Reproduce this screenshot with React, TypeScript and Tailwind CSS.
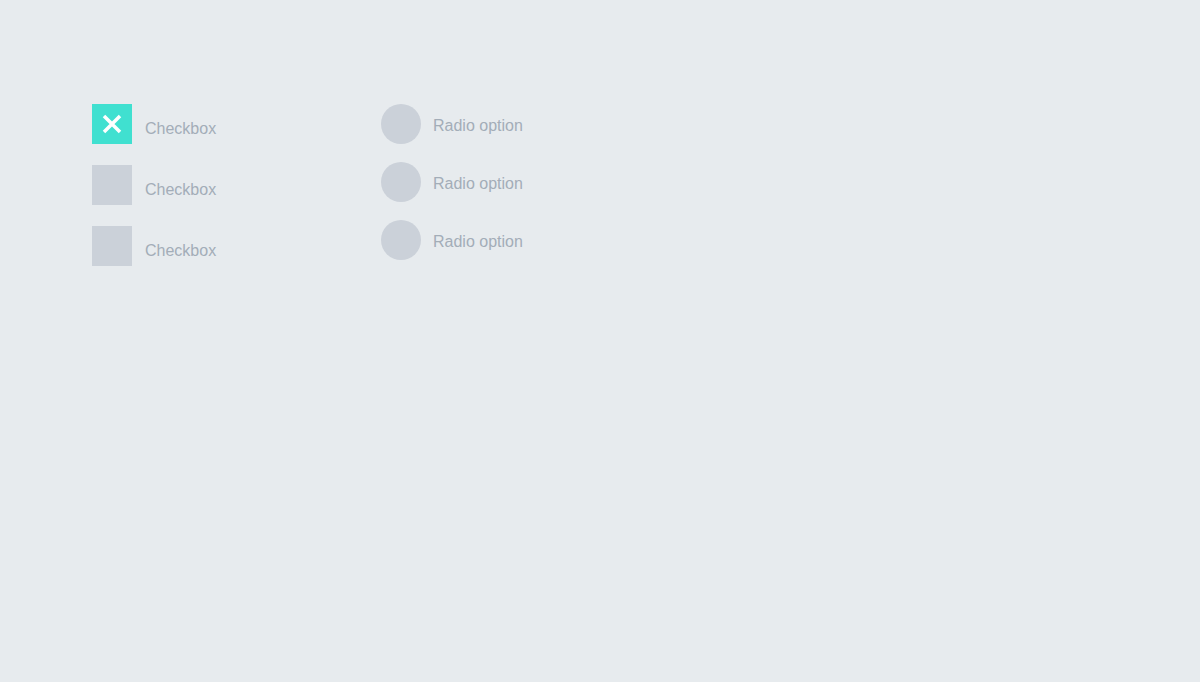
import React from 'react';

function CheckRow({ checked }: { checked?: boolean }) {
  return (
    <div className="flex items-start gap-[13px]">
      <div
        className={`w-10 h-10 flex items-center justify-center ${
          checked ? 'bg-[#40e0d0]' : 'bg-[#cbd1d9]'
        }`}
      >
        {checked && (
          <svg width="20" height="20" viewBox="0 0 20 20">
            <path d="M2 2 L18 18 M18 2 L2 18" stroke="#fff" strokeWidth="3.5" strokeLinecap="butt" />
          </svg>
        )}
      </div>
      <span className="mt-[16px] text-[16px] leading-[18px] text-[#a3adb8]">Checkbox</span>
    </div>
  );
}

function RadioRow() {
  return (
    <div className="flex items-center gap-3">
      <div className="w-10 h-10 rounded-full bg-[#cbd1d9]" />
      <span className="mt-[4px] text-[16px] leading-[18px] text-[#a3adb8]">Radio option</span>
    </div>
  );
}

export default function App() {
  return (
    <div
      className="w-[1200px] h-[682px] bg-[#e7ebee] pt-[104px] pl-[92px] flex gap-0"
      style={{ fontFamily: '"Liberation Sans", Arial, sans-serif' }}
    >
      <div className="w-[289px] flex flex-col gap-[21px]">
        <CheckRow checked />
        <CheckRow />
        <CheckRow />
      </div>
      <div className="flex flex-col gap-[18px]">
        <RadioRow />
        <RadioRow />
        <RadioRow />
      </div>
    </div>
  );
}
